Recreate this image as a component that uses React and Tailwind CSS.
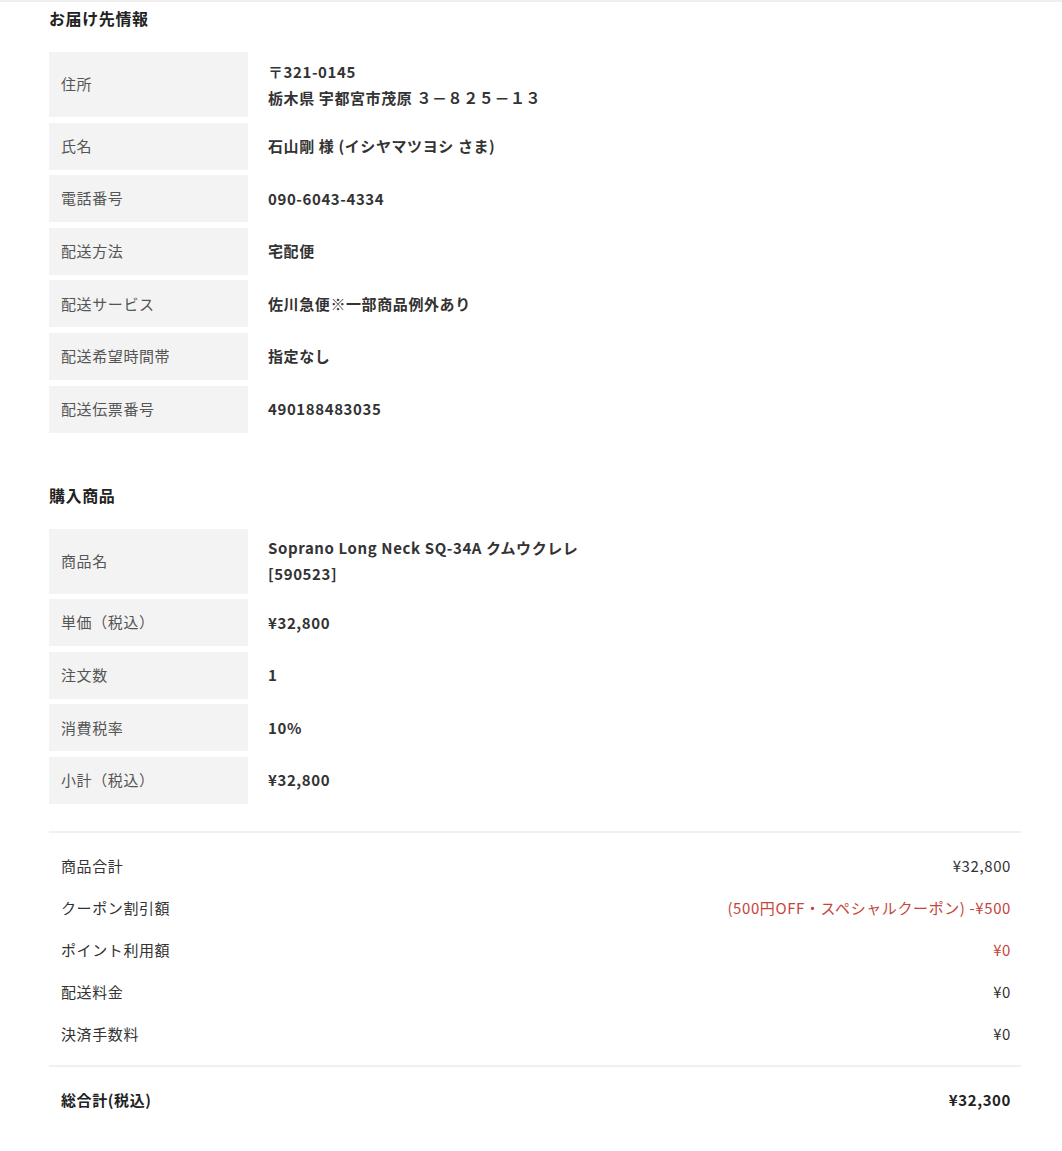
import React from 'react';

const shipping = [
  { label: '住所', value: ['〒321-0145', '栃木県 宇都宮市茂原 ３－８２５－１３'] },
  { label: '氏名', value: ['石山剛 様 (イシヤマツヨシ さま)'] },
  { label: '電話番号', value: ['090-6043-4334'] },
  { label: '配送方法', value: ['宅配便'] },
  { label: '配送サービス', value: ['佐川急便※一部商品例外あり'] },
  { label: '配送希望時間帯', value: ['指定なし'] },
  { label: '配送伝票番号', value: ['490188483035'] },
];

const items = [
  { label: '商品名', value: ['Soprano Long Neck SQ-34A クムウクレレ', '[590523]'] },
  { label: '単価（税込）', value: ['¥32,800'] },
  { label: '注文数', value: ['1'] },
  { label: '消費税率', value: ['10%'] },
  { label: '小計（税込）', value: ['¥32,800'] },
];

const totals = [
  { label: '商品合計', value: '¥32,800' },
  { label: 'クーポン割引額', value: '(500円OFF・スペシャルクーポン) -¥500', red: true },
  { label: 'ポイント利用額', value: '¥0', red: true },
  { label: '配送料金', value: '¥0' },
  { label: '決済手数料', value: '¥0' },
];

const InfoTable = ({ rows }) => (
  <div className="flex flex-col gap-[5.6px]">
    {rows.map((row) => (
      <div key={row.label} className="flex">
        <div
          className={`w-[199px] shrink-0 bg-[#f3f3f3] pl-3 flex items-center text-[#555] ${
            row.value.length > 1 ? 'h-[65px]' : 'h-[47px]'
          }`}
        >
          {row.label}
        </div>
        <div className="pl-5 flex flex-col justify-center font-bold text-[#333] leading-[26px]">
          {row.value.map((line) => (
            <div key={line}>{line}</div>
          ))}
        </div>
      </div>
    ))}
  </div>
);

const App = () => {
  return (
    <div
      className="min-h-[1151px] bg-white border-t-2 border-[#eeeeee] text-[15px] tracking-[0.04em]"
      style={{ fontFamily: '"Noto Sans CJK JP", "Noto Sans", sans-serif' }}
    >
      <div className="ml-[49px] w-[972px]">
        {/* お届け先 */}
        <h2 className="pt-1 leading-6 text-[16px] font-bold text-[#222] mb-[22px]">お届け先情報</h2>
        <InfoTable rows={shipping} />

        {/* 購入商品 */}
        <h2 className="mt-[50px] leading-6 text-[16px] font-bold text-[#222] mb-[22px]">購入商品</h2>
        <InfoTable rows={items} />

        {/* Totals */}
        <div className="mt-[27px] border-t-2 border-[#f0f0f0] pt-[12px] pb-[10px]">
          {totals.map((t) => (
            <div key={t.label} className="h-[42px] flex items-center justify-between pl-3 pr-[10px] text-[#333]">
              <span>{t.label}</span>
              <span className={t.red ? 'text-[#c4463a]' : ''}>{t.value}</span>
            </div>
          ))}
        </div>
        <div className="border-t-2 border-[#f0f0f0] pt-[12px]">
          <div className="h-[42px] flex items-center justify-between pl-3 pr-[10px] font-bold text-[#222]">
            <span>総合計(税込)</span>
            <span>¥32,300</span>
          </div>
        </div>
      </div>
    </div>
  );
};

export default App;
